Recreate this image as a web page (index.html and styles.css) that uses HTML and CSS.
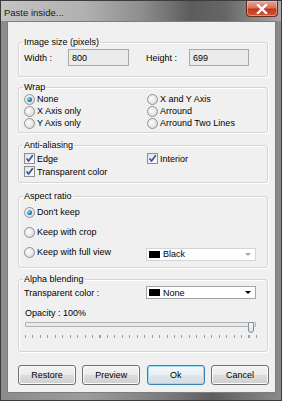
FILE: index.html
```html
<!DOCTYPE html>
<html lang="en">
<head>
    <meta charset="UTF-8">
    <title>Paste inside...</title>
    <link rel="stylesheet" href="styles.css">
</head>
<body>
    <div class="window">
        <div class="titlebar">
            <span class="title">Paste inside...</span>
            <span class="close">
                <svg width="12" height="10" viewBox="0 0 12 10">
                    <path d="M2 1 L10 9 M10 1 L2 9" stroke="#fff" stroke-width="2.4" stroke-linecap="square"/>
                </svg>
            </span>
        </div>

        <div class="client">
            <fieldset class="group g-size">
                <legend>Image size (pixels)</legend>
                <div class="size-row">
                    <span class="lbl">Width :</span>
                    <span class="field w1">800</span>
                    <span class="lbl lbl2">Height :</span>
                    <span class="field w2">699</span>
                </div>
            </fieldset>

            <fieldset class="group g-wrap">
                <legend>Wrap</legend>
                <div class="wrap-grid">
                    <label class="opt"><span class="radio on"></span>None</label>
                    <label class="opt"><span class="radio"></span>X Axis only</label>
                    <label class="opt"><span class="radio"></span>Y Axis only</label>
                    <label class="opt"><span class="radio"></span>X and Y Axis</label>
                    <label class="opt"><span class="radio"></span>Arround</label>
                    <label class="opt"><span class="radio"></span>Arround Two Lines</label>
                </div>
            </fieldset>

            <fieldset class="group g-aa">
                <legend>Anti-aliasing</legend>
                <div class="aa-grid">
                    <label class="opt"><span class="check"><svg width="9" height="9" viewBox="0 0 9 9"><path d="M1.5 4.5 L3.6 7 L7.8 1.2" fill="none" stroke="#2a4fa0" stroke-width="1.6"/></svg></span>Edge</label>
                    <label class="opt"><span class="check"><svg width="9" height="9" viewBox="0 0 9 9"><path d="M1.5 4.5 L3.6 7 L7.8 1.2" fill="none" stroke="#2a4fa0" stroke-width="1.6"/></svg></span>Interior</label>
                    <label class="opt"><span class="check"><svg width="9" height="9" viewBox="0 0 9 9"><path d="M1.5 4.5 L3.6 7 L7.8 1.2" fill="none" stroke="#2a4fa0" stroke-width="1.6"/></svg></span>Transparent color</label>
                </div>
            </fieldset>

            <fieldset class="group g-aspect">
                <legend>Aspect ratio</legend>
                <div class="aspect-row">
                    <label class="opt"><span class="radio on"></span>Don't keep</label>
                </div>
                <div class="aspect-row">
                    <label class="opt"><span class="radio"></span>Keep with crop</label>
                </div>
                <div class="aspect-row">
                    <label class="opt col-lbl"><span class="radio"></span>Keep with full view</label>
                    <div class="combo disabled combo-low">
                        <span class="swatch"></span>
                        <span class="combo-text">Black</span>
                        <span class="arrow"></span>
                    </div>
                </div>
            </fieldset>

            <fieldset class="group g-alpha">
                <legend>Alpha blending</legend>
                <div class="alpha-row">
                    <span class="col-lbl">Transparent color :</span>
                    <div class="combo">
                        <span class="swatch"></span>
                        <span class="combo-text">None</span>
                        <span class="arrow"></span>
                    </div>
                </div>
                <div class="opacity">Opacity : 100%</div>
                <div class="slider">
                    <div class="track"></div>
                    <div class="thumb"></div>
                </div>
                <div class="ticks"></div>
            </fieldset>

            <div class="buttons">
                <button class="btn">Restore</button>
                <button class="btn">Preview</button>
                <button class="btn btn-ok">Ok</button>
                <button class="btn">Cancel</button>
            </div>
        </div>
    </div>
</body>
</html>
```

FILE: styles.css
```css
body {
    margin: 0;
    font-family: "Liberation Sans", Arial, sans-serif;
    font-size: 9px;
    color: #000;
    background: #fff;
}

.window {
    width: 282px;
    height: 401px;
    box-sizing: border-box;
    display: flex;
    flex-direction: column;
    border: 1px solid #3c3c3c;
    background: linear-gradient(90deg, #8c8c8c 0%, #9c9c9c 30%, #7a7a7a 60%, #5e5e5e 75%, #8a8a8a 100%);
}

/* title bar */
.titlebar {
    height: 20px;
    display: flex;
    align-items: flex-start;
    background: linear-gradient(90deg, #c4c4c4 0%, #b0b0b0 30%, #8e8e8e 50%, #5c5c5c 68%, #666 80%, #a8a8a8 100%);
}

.title {
    margin: 6px 0 0 3px;
    font-size: 9.5px;
    color: #1a1a1a;
    line-height: 12px;
}

.close {
    margin-left: auto;
    margin-right: 3px;
    width: 32px;
    height: 16px;
    box-sizing: border-box;
    display: flex;
    align-items: center;
    justify-content: center;
    border: 1px solid #6b2a1e;
    border-top: none;
    border-radius: 0 0 4px 4px;
    background: linear-gradient(#e9a894 0%, #d8715a 45%, #c2361c 55%, #d2583a 100%);
    box-shadow: inset 0 0 0 1px rgba(255, 200, 180, 0.5);
}

/* client area */
.client {
    flex: 1;
    margin: 0 5px 7px 6px;
    padding: 14px 7px 0 10px;
    border: 1px solid #7d7d7d;
    background: #f0f0f0;
}

.group {
    margin: 0;
    padding: 0 5px;
    border: 1px solid #d5d5d5;
    border-radius: 3px;
    box-shadow: inset 1px 1px 0 #fff, 1px 1px 0 #fff;
}

.group legend {
    padding: 0 1px;
    margin-left: -1px;
    line-height: 12px;
    color: #000;
}

.g-size { padding-top: 1px; padding-bottom: 10px; }
.g-wrap { margin-top: 4px; padding-bottom: 3px; }
.g-aa { margin-top: 6px; padding-top: 1px; padding-bottom: 4px; }
.g-aspect { margin-top: 7px; padding-bottom: 5px; }
.g-alpha { margin-top: 5px; padding-top: 1px; padding-bottom: 13px; }

.size-row {
    display: flex;
    align-items: center;
    height: 17px;
}

.lbl { width: 44px; }
.lbl2 { margin-left: 17px; width: 43px; }

.field {
    height: 17px;
    box-sizing: border-box;
    padding: 2px 0 0 3px;
    border: 1px solid #a9a9a9;
    background: #ebebeb;
    line-height: 12px;
}

.w1 { width: 61px; }
.w2 { width: 60px; }

/* options */
.opt {
    display: flex;
    align-items: center;
    white-space: nowrap;
}

.wrap-grid {
    display: grid;
    grid-template-columns: 123px 1fr;
    grid-template-rows: repeat(3, 12px);
    grid-auto-flow: column;
}

.aa-grid {
    display: grid;
    grid-template-columns: 123px 1fr;
    grid-auto-rows: 13px;
}

.radio {
    width: 11px;
    height: 11px;
    box-sizing: border-box;
    margin-right: 2px;
    border: 1px solid #929292;
    border-radius: 50%;
    background: radial-gradient(circle at 40% 40%, #fdfdfd 0%, #e6e6e6 55%, #c9c9c9 100%);
    display: flex;
    align-items: center;
    justify-content: center;
}

.radio.on::after {
    content: "";
    width: 5px;
    height: 5px;
    border-radius: 50%;
    background: radial-gradient(circle at 35% 35%, #9fe2f5 0%, #2c8cc0 45%, #174a7a 100%);
}

.check {
    width: 11px;
    height: 11px;
    box-sizing: border-box;
    margin-right: 2px;
    border: 1px solid #8e8f8f;
    background: linear-gradient(135deg, #e2e2e2, #fbfbfb);
    display: flex;
    align-items: center;
    justify-content: center;
}

.aspect-row {
    display: flex;
    align-items: center;
    height: 20px;
}

.col-lbl { width: 122px; }

/* combo boxes */
.combo {
    width: 110px;
    height: 13px;
    box-sizing: border-box;
    display: flex;
    align-items: center;
    padding: 0 4px 0 2px;
    border: 1px solid #a5a5a5;
    background: #fff;
}

.combo-low { margin-top: 4px; }

.combo.disabled {
    border-color: #d4d4d4;
}

.swatch {
    width: 11px;
    height: 7px;
    background: #000;
    margin-right: 3px;
}

.arrow {
    margin-left: auto;
    width: 0;
    height: 0;
    border-left: 3px solid transparent;
    border-right: 3px solid transparent;
    border-top: 3px solid #000;
}

.combo.disabled .arrow {
    border-top-color: #a8a8a8;
}

.alpha-row {
    display: flex;
    align-items: center;
    height: 13px;
}

.opacity {
    margin-top: 8px;
    line-height: 12px;
    padding-left: 1px;
}

/* slider */
.slider {
    position: relative;
    height: 12px;
    width: 233px;
    margin-left: 1px;
}

.track {
    margin-top: 3px;
    width: 231px;
    height: 5px;
    box-sizing: border-box;
    border: 1px solid #b4b4b4;
    border-radius: 1px;
    background: #e7eaea;
}

.thumb {
    position: absolute;
    top: 0;
    right: 4px;
    width: 6px;
    height: 11px;
    box-sizing: border-box;
    border: 1px solid #7a8e9c;
    border-radius: 2px 2px 3px 3px;
    background: linear-gradient(#fdfdfd, #dcdcdc);
}

.ticks {
    margin: 1px 0 0 1px;
    width: 232px;
    height: 3px;
    background: repeating-linear-gradient(90deg, #a0a0a0 0, #a0a0a0 1px, transparent 1px, transparent 7.45px);
}

/* buttons */
.buttons {
    display: flex;
    justify-content: space-between;
    margin-top: 13px;
    width: 251px;
}

.btn {
    width: 58px;
    height: 20px;
    padding: 0;
    font-family: "Liberation Sans", Arial, sans-serif;
    font-size: 9px;
    color: #000;
    border: 1px solid #707070;
    border-radius: 3px;
    background: linear-gradient(#f3f3f3 0%, #ebebeb 48%, #dcdcdc 52%, #cfcfcf 100%);
    box-shadow: inset 0 0 0 1px #fbfbfb;
}

.btn-ok {
    border-color: #3c7fb1;
    background: linear-gradient(#f4f8fa 0%, #e9eff2 48%, #dde6eb 52%, #d3dde3 100%);
    box-shadow: inset 0 0 0 1px #9edcf2;
}
```
